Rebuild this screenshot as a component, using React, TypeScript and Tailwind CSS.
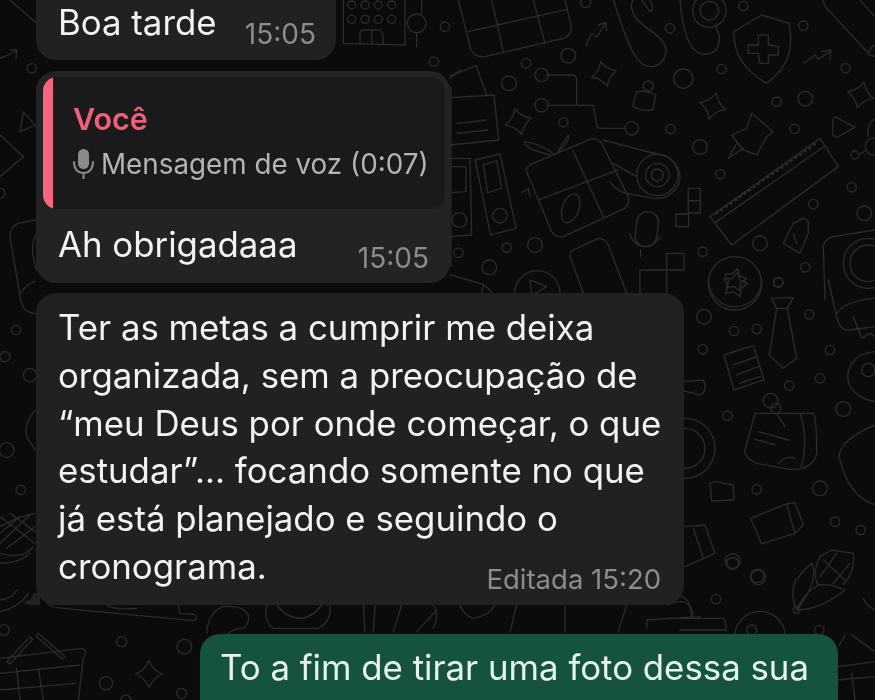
import React from "react";

const font = "font-['Inter','Noto_Sans',sans-serif]";

type C = [number, number, number];

function Rings({ items }: { items: C[] }) {
    return (
        <>
            {items.map(([x, y, r], i) => (
                <circle key={i} cx={x} cy={y} r={r} />
            ))}
        </>
    );
}

function Sparkle({ x, y, r, rot = 0 }: { x: number; y: number; r: number; rot?: number }) {
    const k = r * 0.3;
    return (
        <path
            transform={`translate(${x} ${y}) rotate(${rot})`}
            d={`M0,${-r} Q${k},${-k} ${r},0 Q${k},${k} 0,${r} Q${-k},${k} ${-r},0 Q${-k},${-k} 0,${-r}Z`}
        />
    );
}

function Star({ x, y, r }: { x: number; y: number; r: number }) {
    const pts: string[] = [];
    for (let i = 0; i < 10; i++) {
        const a = (Math.PI / 5) * i - Math.PI / 2 + 0.2;
        const d = i % 2 === 0 ? r : r * 0.55;
        pts.push(`${(x + Math.cos(a) * d).toFixed(1)},${(y + Math.sin(a) * d).toFixed(1)}`);
    }
    return <polygon points={pts.join(" ")} strokeLinejoin="round" />;
}

// the chat wallpaper, authored in 3x crop coordinates
function Wallpaper() {
    return (
        <svg className="absolute inset-0" width="875" height="700" viewBox="0 0 875 700" fill="none" stroke="#2b2b2b" strokeLinecap="round" strokeLinejoin="round">
            <g transform="translate(450 0) scale(0.3333)" strokeWidth="4">
                <path d="M25,0 L60,140 Q70,175 105,170 L340,115 Q370,105 362,70 L345,0 M55,95 L350,28 M125,0 L160,155 M250,0 L285,130" />
                <path d="M408,138 L425,100 L440,112 L465,72 M445,75 L468,68 L470,92" />
                <path d="M490,0 C510,60 530,130 560,175 C590,215 640,205 648,155 C650,120 610,100 580,75 C540,45 540,10 550,0 M575,0 L600,35 Q615,30 600,0" />
                <path d="M690,0 C695,60 705,110 725,140 C750,175 800,170 808,125 C812,90 790,85 800,70" />
                <Rings items={[[778, 32, 50], [778, 32, 28]]} />
                <path d="M852,95 Q900,65 935,45 Q985,60 1018,70 C1030,140 1020,200 950,250 C880,210 850,160 852,95 Z" />
                <path d="M925,105 L955,105 L955,135 L985,140 L985,165 L955,165 L955,190 L930,190 L925,160 L895,160 L895,135 L925,135Z" />
                <path d="M1062,190 L1095,165 L1105,178 L1140,155 M1115,155 L1143,150 L1140,178" />
                <path d="M1120,0 Q1125,25 1140,35 L1260,165 L1275,170 M1230,0 L1275,50 M1255,160 Q1265,135 1275,135" />
                <Sparkle x={462} y={222} r={38} rot={-15} />
                <Sparkle x={788} y={318} r={40} rot={15} />
                <Sparkle x={205} y={365} r={40} rot={-15} />
                <Sparkle x={1232} y={285} r={40} rot={15} />
                <path d="M0,228 L78,197 L110,285 M0,293 L132,285 L146,420 L0,435 M22,370 L110,360 M22,400 L112,390" />
                <path d="M290,225 L365,225 Q380,225 380,240 L380,315 M290,316 L430,316 L440,375 Q440,385 455,385 L525,385" />
                <path d="M548,318 L560,275 Q590,270 618,285 L608,330 Q575,335 548,318Z" />
                <circle cx="595" cy="258" r="15" />
                <path d="M905,340 L970,395 L950,410 L920,465 L880,450 L845,405 L890,385 Z M880,445 L835,475 L860,430" />
                <path d="M1155,350 L1215,382 L1160,412 Q1145,410 1148,380 Q1148,350 1155,350Z" />
                <path d="M1275,355 Q1250,370 1255,410 M1230,462 L1250,450" />
                <Rings items={[[1272, 440, 26], [1215, 465, 12]]} />
                <path d="M780,650 L1110,415 L1165,500 L845,735 Z M795,668 L1125,438" />
                <path d="M800,640 L1105,425" strokeDasharray="3 14" strokeWidth="8" />
                <path d="M228,510 Q235,495 250,490 L420,418 Q440,412 455,430 L535,590 Q540,610 525,625 L340,710 Q320,715 305,695 Z M368,450 L460,650 M265,600 L505,510" />
                <ellipse cx="362" cy="625" rx="25" ry="45" transform="rotate(20 362 625)" />
                <path d="M315,465 Q270,430 225,425 Q220,445 300,465 M320,460 L355,405 Q360,425 320,460 M215,578 L235,565 L240,590" />
                <path d="M460,420 L620,462 C670,465 690,510 690,530 C690,570 650,600 610,595 L530,580 M490,490 L560,530 M480,545 Q500,575 530,580" />
                <Rings items={[[622, 525, 62], [622, 525, 35], [622, 525, 18]]} />
                <path d="M0,475 L60,475 L65,705 L0,710 M5,500 L48,500 L48,575 L5,578" />
                <circle cx="28" cy="660" r="22" />
                <path d="M75,480 L150,462 L198,685 L122,705Z M100,495 L140,482 L155,565 L113,578Z" />
                <circle cx="150" cy="647" r="22" />
                <path d="M3,260 L3,800" />
                <rect x="715" y="565" width="36" height="37" />
                <rect x="715" y="602" width="36" height="37" />
                <rect x="678" y="642" width="38" height="38" />
                <rect x="558" y="635" width="65" height="105" rx="32" transform="rotate(8 590 687)" />
                <path d="M540,700 C545,740 600,760 630,710 M572,750 L572,770" />
                <path d="M360,770 Q360,750 380,745 L445,715 Q465,715 475,735 L530,880 M360,770 L400,880" />
                <path d="M194,880 A68,68 0 0 1 330,880 M240,840 L290,860 L245,885Z" />
                <path d="M0,825 L90,850 Q115,860 125,880 M95,880 L100,855" />
                <path d="M570,810 L650,810 L650,760 L702,760 L702,810 L650,810 L650,880 M570,810 L570,880" />
                <circle cx="855" cy="850" r="80" />
                <Star x={855} y={855} r={38} />
                <path d="M1125,900 L1120,740 Q1125,715 1150,710 L1275,690" />
                <Rings items={[[1255, 790, 75], [1255, 790, 55]]} />
                <path d="M1000,730 L1030,670 L1060,655 L1075,665 L1075,700 L1050,760 Z M1030,700 L1040,730" />
                <Rings
                    items={[
                        [407, 8, 15], [660, 85, 14], [880, 18, 14], [1060, 77, 14], [355, 167, 22], [228, 190, 14], [177, 250, 22], [275, 225, 20],
                        [275, 316, 20], [340, 367, 14], [545, 385, 20], [662, 387, 14], [700, 236, 29], [815, 207, 14], [1187, 205, 14], [980, 305, 14],
                        [1066, 296, 22], [1034, 387, 14], [750, 441, 22], [811, 523, 14], [1205, 562, 14], [1090, 612, 14], [1243, 640, 22], [930, 730, 22],
                        [758, 755, 14], [1066, 802, 14], [985, 846, 14], [255, 735, 22], [170, 743, 14], [25, 758, 14], [118, 802, 22],
                    ]}
                />
            </g>

            <g transform="translate(680 280) scale(0.3333)" strokeWidth="4">
                <path d="M275,55 L340,52 L322,85 L350,235 L310,265 L268,225 L290,85Z M290,85 L322,85" />
                <path d="M132,225 L220,197 L252,300 L162,330Z M160,255 L225,232 M170,285 L235,260 M178,310 L240,290" />
                <path d="M445,0 L470,110 Q480,155 510,150 L585,140 M470,100 Q500,60 585,55 M520,110 L545,175 L570,160 L585,170 M585,215 C520,220 490,270 510,320 Q540,360 585,365" />
                <path d="M585,435 C500,470 470,510 480,540 C500,620 540,660 585,675" />
                <path d="M225,400 L400,400 Q410,410 410,520 Q400,570 330,568 L230,550 Q190,530 195,510 Z M235,455 L325,480 M225,478 L285,495 M295,550 Q320,525 345,535 M360,400 Q385,470 365,560 M290,400 L315,440" />
                <Rings items={[[272, 362, 22], [288, 385, 15], [565, 270, 20]]} />
                <path d="M0,330 L60,345 Q85,330 70,300 L10,305" />
                <Rings items={[[15, 505, 90], [15, 505, 60]]} />
                <path d="M90,610 Q115,600 130,610 L160,615 L162,660 L95,663 Z" />
                <path d="M212,715 L320,672 L345,760 L245,792 Z M320,672 L345,668 L370,735 L345,760" />
                <path d="M15,740 L75,735 L105,820 L15,860 M40,745 L70,835" />
                <Rings
                    items={[
                        [72, 110, 22], [162, 153, 14], [230, 147, 14], [388, 103, 14], [68, 208, 14], [450, 210, 14], [420, 295, 14], [328, 317, 14],
                        [142, 407, 14], [490, 387, 22], [230, 628, 14], [420, 625, 22], [465, 725, 14], [542, 750, 14], [158, 843, 22], [232, 888, 20], [295, 8, 14],
                    ]}
                />
                <path d="M85,0 A80,80 0 0 0 245,0" />
                <Star x={165} y={0} r={35} />
            </g>

            <g transform="translate(680 560) scale(0.3333)" strokeWidth="4">
                <path d="M350,150 Q330,100 345,65 Q370,30 395,10 Q420,60 350,150 M350,150 Q420,150 495,90 Q450,70 415,75 Q370,100 350,150" />
                <path d="M415,75 Q395,40 420,-10 L455,-30 L520,-20 Q525,40 490,72 M430,0 L495,60 M470,-20 L420,50 M510,10 L460,70" />
                <Rings items={[[235, 52, 22], [108, 117, 14], [158, 10, 18], [350, 150, 10], [418, 210, 14], [215, 210, 15]]} />
                <path d="M0,110 Q30,110 35,170 M0,175 L130,175 Q140,185 138,210 L0,210" />
                <path d="M165,240 A75,75 0 0 1 315,220" />
                <path d="M550,115 Q560,140 585,150 M515,225 L585,275 M478,255 L495,225 M475,320 L585,305 M470,360 L585,350 M515,340 L525,420" />
            </g>

            <g transform="translate(0 590) scale(0.3333)" strokeWidth="4">
                <path d="M20,215 L90,140 L98,148 L30,222Z M115,130 L195,200 L188,208 L108,138Z" />
                <path d="M0,205 L245,175 Q265,180 250,205 L235,330 M0,250 L240,225 M0,300 L225,280 M50,235 L60,330 M115,235 L130,330" />
                <Rings items={[[12, 120, 16], [365, 155, 15], [553, 170, 22], [318, 280, 20], [545, 310, 15], [378, 330, 15]]} />
                <Sparkle x={447} y={252} r={40} rot={0} />
                <path d="M140,40 Q160,55 190,55 L580,92 Q600,85 580,72 L540,70 L535,45 M320,45 Q340,60 410,55 M0,65 Q60,50 85,10 M0,30 Q40,25 50,0" />
            </g>

            <g transform="translate(200 595) scale(0.3333)" strokeWidth="4">
                <path d="M20,115 Q25,50 70,35 Q130,30 145,60 Q150,85 130,100 Q100,100 85,115" />
                <path d="M200,30 Q190,80 220,100 L355,100 Q395,80 390,30 M230,30 Q260,70 305,70 Q340,65 365,30" />
                <path d="M490,30 L495,110 M525,30 L520,110 M605,30 L580,110 M710,45 L650,110 M700,30 Q720,60 700,100" />
                <path d="M780,30 Q790,60 820,70 Q870,60 885,30 M950,30 L930,110 M1095,30 L1095,110 M1280,30 L1255,110" />
                <path d="M1400,30 Q1470,0 1480,60 M1340,100 L1340,75 L1500,65" />
            </g>

            <g transform="translate(0 60) scale(0.3333)" strokeWidth="4">
                <circle cx="95" cy="25" r="14" />
                <path d="M70,155 L105,195 L60,215 Z M0,225 L70,290 L0,350" />
                <path d="M105,480 L55,490 Q30,500 30,530 L62,720 Q70,760 105,760 M62,700 Q80,670 105,665 M110,520 Q85,560 110,630" />
                <Rings items={[[0, 400, 15], [48, 810, 14], [15, 890, 15], [90, 945, 20], [20, 1170, 22], [62, 1290, 14]]} />
                <path d="M105,1050 Q70,1090 80,1130 L105,1170" />
                <path d="M0,1400 Q50,1370 105,1360 M0,1370 L105,1450 M30,1360 L105,1415 M0,1420 L60,1370 M0,1450 L90,1365 M20,1465 L105,1400 M0,1480 Q70,1500 100,1460 M0,1510 Q60,1510 90,1480" />
            </g>

            <g transform="translate(330 0) scale(0.3333)" strokeWidth="4">
                <path d="M40,0 L40,130 L225,135 L225,0 M90,130 L90,100 Q90,90 105,90 L150,90 Q160,95 160,130 M125,90 L125,130 M260,100 L260,140 M275,0 L275,40" />
                <Rings items={[[65, 15, 12], [105, 15, 12], [145, 15, 12], [185, 15, 12], [65, 58, 12], [105, 58, 12], [145, 58, 12], [185, 58, 12], [260, 70, 28], [345, 80, 14], [312, 185, 14]]} />
                <path d="M360,235 L390,210" />
            </g>

            <g transform="scale(0.3333)" strokeWidth="4">
                <path d="M0,175 L25,165 L50,150 M30,150 L50,150 L48,175 M30,0 L110,70" />
            </g>
        </svg>
    );
}

export default function App() {
    return (
        <div className={`relative h-[700px] w-[875px] overflow-hidden bg-[#0b0b0b] blur-[0.5px] ${font}`}>
            <Wallpaper />

            <div className="relative flex flex-col items-start pl-[36px]">
                <div className="-mt-[30px] flex h-[90px] w-[300px] items-end justify-between rounded-[20px] bg-[#212121] pb-[11px] pl-[22px] pr-[20px]">
                    <span className="mb-[7px] text-[34.8px] leading-[40px] text-[#f2f2f2]">Boa tarde</span>
                    <span className="text-[28px] leading-[30px] text-[#8c8c8c]">15:05</span>
                </div>

                <div className="mt-[11px] h-[212px] w-[414px] rounded-[20px] bg-[#232323] pl-[7px] pr-[5px] pt-[6px]">
                    <div className="flex h-[132px] overflow-hidden rounded-[14px] bg-[#1a1a1a]">
                        <div className="w-[10px] rounded-l-[14px] bg-[#f4677f]" />
                        <div className="flex flex-col pl-[20px] pt-[24px]">
                            <span className="text-[30.5px] font-semibold leading-[36px] text-[#ee6079]">Você</span>
                            <div className="mt-[9px] flex items-center gap-[7px]">
                                <svg width="21" height="30" viewBox="0 0 21 30" fill="none">
                                    <rect x="5" y="0" width="11" height="20" rx="5.5" fill="#8a8a8a" />
                                    <path d="M1,13 C1,20 5,24 10.5,24 C16,24 20,20 20,13 M10.5,24 L10.5,30" stroke="#8a8a8a" strokeWidth="2" strokeLinecap="round" />
                                </svg>
                                <span className="whitespace-nowrap text-[27.8px] leading-[36px] text-[#b4b4b4]">Mensagem de voz (0:07)</span>
                            </div>
                        </div>
                    </div>
                    <div className="flex items-end justify-between pl-[15px] pr-[16px] pt-[11px]">
                        <span className="text-[34.8px] leading-[48px] text-[#f2f2f2]">Ah obrigadaaa</span>
                        <span className="-mb-[5px] text-[28px] leading-[30px] text-[#8c8c8c]">15:05</span>
                    </div>
                </div>

                <div className="relative mt-[10px] h-[312px] w-[648px] rounded-[20px] bg-[#212121] pl-[22px] pr-[22px] pt-[11px]">
                    <div className="whitespace-nowrap text-[34.8px] leading-[47.8px] text-[#f2f2f2]">
                        <p>Ter as metas a cumprir me deixa</p>
                        <p>organizada, sem a preocupação de</p>
                        <p>“meu Deus por onde começar, o que</p>
                        <p>estudar”... focando somente no que</p>
                        <p>já está planejado e seguindo o</p>
                        <p>cronograma.</p>
                    </div>
                    <span className="absolute bottom-[11px] right-[23px] whitespace-nowrap text-[27.5px] leading-[30px] text-[#8c8c8c]">Editada 15:20</span>
                    <svg className="absolute -left-[12px] bottom-0" width="16" height="12" viewBox="0 0 16 12">
                        <path d="M16,0 L16,12 L6,12 Q0,11 0,9 Q8,8 9,0Z" fill="#212121" />
                    </svg>
                </div>

                <div className="mt-[29px] self-start">
                    <div className="ml-[164px] h-[100px] w-[638px] rounded-[20px] bg-[#15533c] pl-[20px] pt-[13px]">
                        <span className="whitespace-nowrap text-[34.8px] leading-[40px] text-[#e6f3ec]">To a fim de tirar uma foto dessa sua</span>
                    </div>
                </div>
            </div>
        </div>
    );
}
